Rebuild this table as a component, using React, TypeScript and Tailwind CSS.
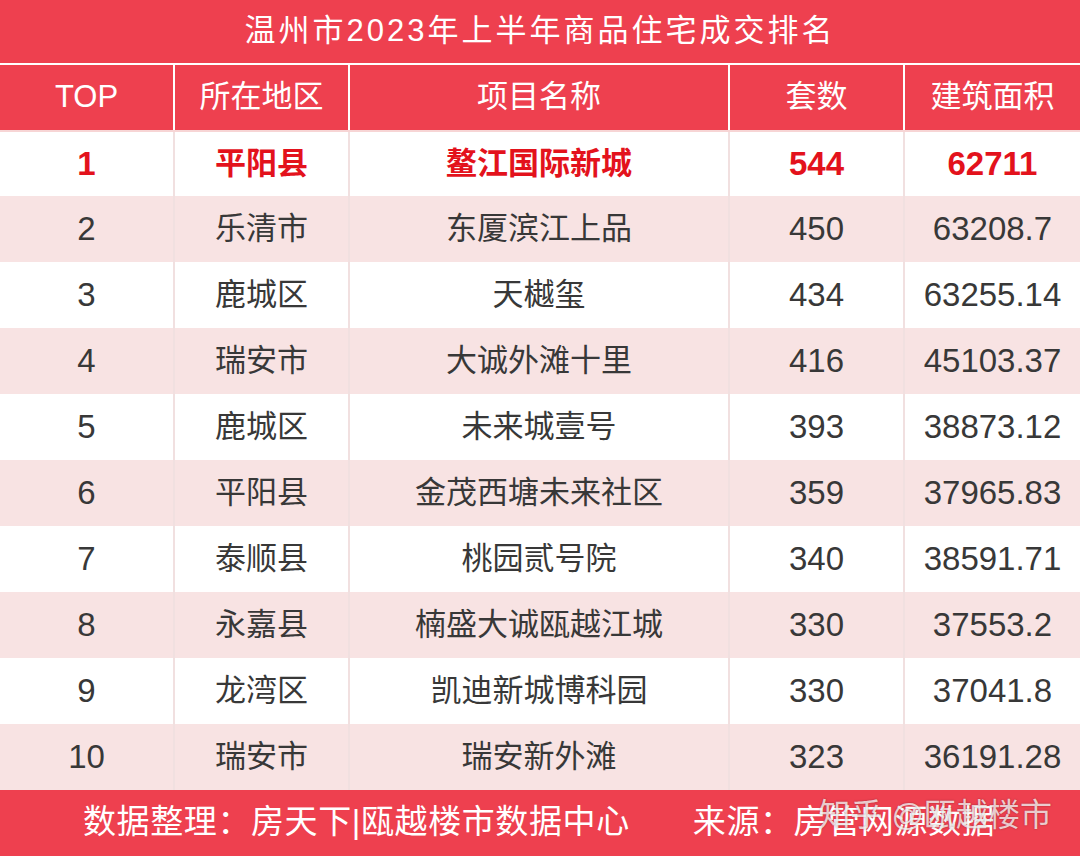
import { FC } from 'react';

const rows = [
  ['1', '平阳县', '鳌江国际新城', '544', '62711'],
  ['2', '乐清市', '东厦滨江上品', '450', '63208.7'],
  ['3', '鹿城区', '天樾玺', '434', '63255.14'],
  ['4', '瑞安市', '大诚外滩十里', '416', '45103.37'],
  ['5', '鹿城区', '未来城壹号', '393', '38873.12'],
  ['6', '平阳县', '金茂西塘未来社区', '359', '37965.83'],
  ['7', '泰顺县', '桃园贰号院', '340', '38591.71'],
  ['8', '永嘉县', '楠盛大诚瓯越江城', '330', '37553.2'],
  ['9', '龙湾区', '凯迪新城博科园', '330', '37041.8'],
  ['10', '瑞安市', '瑞安新外滩', '323', '36191.28'],
];

const headers = ['TOP', '所在地区', '项目名称', '套数', '建筑面积'];

const cols = 'grid grid-cols-[175px_175px_380px_175px_175px]';

const App: FC = () => {
  return (
    <div className="w-[1080px] h-[856px] bg-white overflow-hidden font-['Liberation_Sans','Noto_Sans_CJK_SC',sans-serif]">
      {/* Title */}
      <div className="h-[65px] bg-[#ee404f] border-b-2 border-white flex items-center justify-center text-white text-[31px] tracking-[3px]">
        温州市2023年上半年商品住宅成交排名
      </div>

      {/* Header */}
      <div className={`${cols} h-[65px] bg-[#ee404f] text-white text-[31px]`}>
        {headers.map((h, i) => (
          <div
            key={h}
            className={`flex items-center justify-center ${i < 4 ? 'border-r-2 border-white' : ''}`}
          >
            {h}
          </div>
        ))}
      </div>

      {/* Body */}
      {rows.map((r, ri) => (
        <div
          key={r[0]}
          className={`${cols} h-[66px] ${ri % 2 === 1 ? 'bg-[#f8e3e3]' : 'bg-white'} ${ri === 0 ? 'border-t-2 border-[#f7d5d5]' : ''}`}
        >
          {r.map((c, ci) => (
            <div
              key={ci}
              className={`flex items-center justify-center ${ci === 1 || ci === 2 ? 'text-[31px]' : 'text-[33px]'} ${
                ci < 4 ? 'border-r-2 border-[#f1e0e0]' : ''
              } ${ri === 0 ? 'text-[#e3121c] font-bold' : 'text-[#383838]'}`}
            >
              {c}
            </div>
          ))}
        </div>
      ))}

      {/* Footer */}
      <div className="relative h-[66px] bg-[#ee404f] flex items-center text-white text-[33px] tracking-[0.6px] pl-[83px] pb-[2px]">
        <span>数据整理：房天下|瓯越楼市数据中心</span>
        <span className="ml-[63px]">来源：房管网源数据</span>
        <div className="absolute right-[28px] top-[1px] text-[32px] tracking-normal text-white/75 [text-shadow:0_0_2px_rgba(0,0,0,0.35)]">
          知乎 @瓯越楼市
        </div>
      </div>
    </div>
  );
};

export default App;
